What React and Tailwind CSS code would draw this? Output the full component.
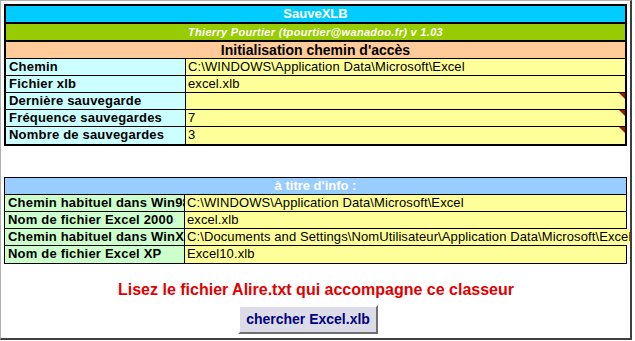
import React from "react";

const F = { fontFamily: '"Liberation Sans", Arial, sans-serif' };

function Tri() {
  return (
    <svg className="absolute right-0 top-0" width="6" height="6" viewBox="0 0 6 6">
      <polygon points="0,0 6,0 6,6" fill="#a01800" />
    </svg>
  );
}

function Row({ label, value, labelBg, last, tri, overflow }) {
  return (
    <div className={`flex h-[17px] ${last ? "" : "border-b border-black"}`}>
      <div
        className={`w-[180px] shrink-0 border-r border-black ${labelBg} overflow-hidden whitespace-nowrap pl-[3px] text-[13px] font-bold leading-[16px] tracking-[0.2px] text-black`}
      >
        {label}
      </div>
      <div
        className={`relative flex-1 bg-[#ffff99] ${overflow ? "overflow-visible" : "overflow-hidden"} whitespace-nowrap pl-[2px] text-[13px] leading-[16px] tracking-[0.1px] text-black`}
      >
        {value}
        {tri && <Tri />}
      </div>
    </div>
  );
}

export default function App() {
  return (
    <div className="w-[635px] h-[341px] bg-white overflow-hidden" style={F}>
      <div className="w-[632px] h-[340px] border-l border-t border-[#b0b0b0] border-r-2 border-b-2 border-r-[#404040] border-b-[#404040] overflow-hidden">
        <div className="pl-[3px] pt-[3px] pr-[2px]">
          {/* Table 1 */}
          <div className="w-[623px] border-2 border-black">
            <div className="h-[18px] bg-[#00ccff] border-b-2 border-black text-center text-[13px] font-bold leading-[16px] text-white">
              SauveXLB
            </div>
            <div className="h-[18px] bg-[#99cc00] border-b-2 border-black text-center text-[11px] font-bold italic leading-[16px] tracking-[0.3px] text-white">
              Thierry Pourtier (tpourtier@wanadoo.fr) v 1.03
            </div>
            <div className="h-[17px] bg-[#ffcc99] border-b border-black text-center text-[14px] font-bold leading-[16px] text-black">
              Initialisation chemin d'accès
            </div>
            <Row labelBg="bg-[#ccffff]" label="Chemin" value="C:\WINDOWS\Application Data\Microsoft\Excel" />
            <Row labelBg="bg-[#ccffff]" label="Fichier xlb" value="excel.xlb" />
            <Row labelBg="bg-[#ccffff]" label="Dernière sauvegarde" value="" tri />
            <Row labelBg="bg-[#ccffff]" label="Fréquence sauvegardes" value="7" tri />
            <Row labelBg="bg-[#ccffff]" label="Nombre de sauvegardes" value="3" tri last />
          </div>

          {/* Table 2 */}
          <div className="mt-[31px] w-[623px] border border-black">
            <div className="h-[17px] bg-[#99ccff] border-b border-black text-center text-[13px] font-bold leading-[16px] text-white">
              à titre d'info :
            </div>
            <Row labelBg="bg-[#ccffcc]" label="Chemin habituel dans Win98" value="C:\WINDOWS\Application Data\Microsoft\Excel" />
            <Row labelBg="bg-[#ccffcc]" label="Nom de fichier Excel 2000" value="excel.xlb" />
            <Row labelBg="bg-[#ccffcc]" label="Chemin habituel dans WinXP" value="C:\Documents and Settings\NomUtilisateur\Application Data\Microsoft\Excel" overflow />
            <Row labelBg="bg-[#ccffcc]" label="Nom de fichier Excel XP" value="Excel10.xlb" last />
          </div>

          <div className="mt-[17px] flex flex-col items-center">
            <div className="text-[16px] font-bold leading-[18px] text-[#e00000]">
              Lisez le fichier Alire.txt qui accompagne ce classeur
            </div>
            <button className="mt-[6px] mr-[16px] h-[29px] w-[140px] border-2 border-t-white border-l-white border-r-[#707070] border-b-[#707070] bg-[#dcdce8] text-[14px] font-bold text-[#000080]">
              chercher Excel.xlb
            </button>
          </div>
        </div>
      </div>
    </div>
  );
}
